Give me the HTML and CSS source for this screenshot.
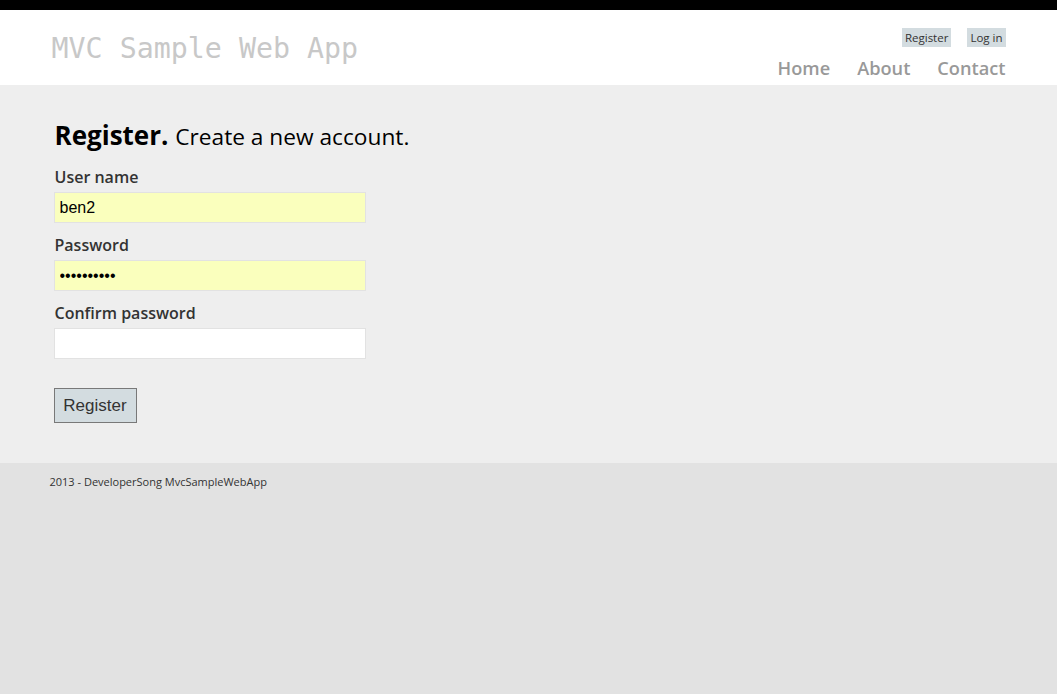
FILE: index.html
```html
<!DOCTYPE html>
<html>
<head>
<meta charset="utf-8">
<title>Register</title>
<link rel="stylesheet" href="styles.css">
</head>
<body>
<header class="site-header">
  <div class="container header-row">
    <div class="site-title">MVC Sample Web App</div>
    <div class="header-right">
      <ul class="login-links">
        <li><a href="#">Register</a></li>
        <li><a href="#">Log in</a></li>
      </ul>
      <ul class="menu">
        <li><a href="#">Home</a></li>
        <li><a href="#">About</a></li>
        <li><a href="#">Contact</a></li>
      </ul>
    </div>
  </div>
</header>
<main class="main-content">
  <div class="container content">
    <h1 class="page-title"><strong>Register.</strong> <span>Create a new account.</span></h1>
    <form class="form">
      <label class="field-label">User name</label>
      <input class="field autofill" type="text" value="ben2">
      <label class="field-label">Password</label>
      <input class="field autofill" type="password" value="1234567890">
      <label class="field-label">Confirm password</label>
      <input class="field" type="password" value="">
      <button class="btn" type="button">Register</button>
    </form>
  </div>
</main>
<footer class="site-footer">
  <div class="container">
    <p class="footer-text">2013 - DeveloperSong MvcSampleWebApp</p>
  </div>
</footer>
</body>
</html>
```
FILE: styles.css
```css
html, body {
  margin: 0;
  padding: 0;
}
body {
  border-top: 10px solid #000;
  background: #e2e2e2;
  font-family: "Open Sans", "Noto Sans", sans-serif;
  color: #333;
  min-height: 684px;
}
.container {
  width: 960px;
  margin: 0 auto;
}
.site-header {
  background: #fff;
  height: 75px;
}
.header-row {
  display: flex;
  justify-content: space-between;
  align-items: flex-start;
}
.site-title {
  font-family: "DejaVu Sans Mono", "Liberation Mono", monospace;
  font-size: 28.3px;
  color: #c8c8c8;
  margin: 23px 0 0 3px;
  line-height: 32px;
}
.header-right {
  display: flex;
  flex-direction: column;
  align-items: flex-end;
  margin-right: 3px;
}
ul {
  list-style: none;
  margin: 0;
  padding: 0;
}
.login-links {
  display: flex;
  gap: 16px;
  margin-top: 18px;
}
.login-links a {
  display: block;
  background: #d3dce0;
  color: #333;
  text-decoration: none;
  font-size: 11.5px;
  line-height: 19px;
  padding: 0 3px;
}
.menu {
  display: flex;
  gap: 27px;
  margin-top: 9px;
}
.menu a {
  color: #999;
  text-decoration: none;
  font-size: 18.2px;
  font-weight: 600;
  line-height: 24px;
}
.main-content {
  background: #eeeeee;
  height: 378px;
}
.content {
  padding: 34px 0 0 5px;
  box-sizing: border-box;
}
.page-title {
  margin: 0 0 0 1px;
  font-size: 26px;
  line-height: 32px;
  color: #000;
  font-weight: 400;
}
.page-title strong {
  font-weight: 700;
}
.page-title span {
  font-size: 22.7px;
}
.form {
  display: flex;
  flex-direction: column;
  align-items: flex-start;
  margin-top: 14px;
}
.field-label {
  font-size: 16px;
  font-weight: 600;
  color: #333;
  line-height: 20px;
  margin-bottom: 5px;
  padding-left: 1px;
}
.field {
  width: 312px;
  height: 31px;
  box-sizing: border-box;
  border: 1px solid #e2e2e2;
  background: #fff;
  padding: 0 5px;
  font-family: "Liberation Sans", Arial, sans-serif;
  font-size: 16px;
  color: #000;
  margin: 0 0 12px;
  outline: none;
}
.field.autofill {
  background: #faffbd;
}
.btn {
  margin-top: 17px;
  background: #d3dce0;
  border: 1px solid #787878;
  font-family: "Liberation Sans", Arial, sans-serif;
  font-size: 17px;
  color: #333;
  height: 35px;
  width: 83px;
  padding: 0;
}
.site-footer {
  background: #e2e2e2;
}
.footer-text {
  margin: 0;
  padding: 11px 0 0 1px;
  font-size: 11px;
  line-height: 16px;
  color: #333;
}
```
